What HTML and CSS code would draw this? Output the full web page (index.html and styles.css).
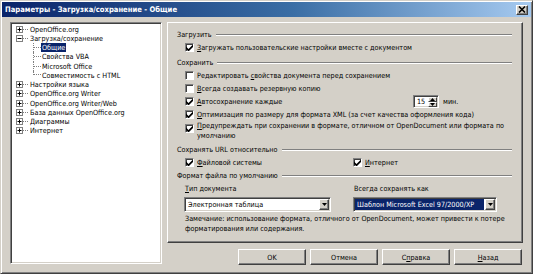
FILE: index.html
```html
<!DOCTYPE html>
<html lang="ru">
<head>
    <meta charset="UTF-8">
    <title>Параметры - Загрузка/сохранение - Общие</title>
    <link rel="stylesheet" href="styles.css">
</head>
<body>
<div class="dialog">
    <div class="titlebar">
        <span class="title">Параметры - Загрузка/сохранение - Общие</span>
        <span class="close-btn">
            <svg width="8" height="7" viewBox="0 0 8 7"><path d="M1 0.5l6 6M7 0.5l-6 6" stroke="#000" stroke-width="1.6"/></svg>
        </span>
    </div>
    <div class="main">
        <div class="tree">
            <div class="node"><svg class="exp" width="7" height="7" viewBox="0 0 7 7"><rect x=".5" y=".5" width="6" height="6" fill="#fff" stroke="#808080"/><path d="M1.5 3.5h4M3.5 1.5v4" stroke="#000"/></svg><span class="dash"></span><span class="label">OpenOffice.org</span></div>
            <div class="node"><svg class="exp" width="7" height="7" viewBox="0 0 7 7"><rect x=".5" y=".5" width="6" height="6" fill="#fff" stroke="#808080"/><path d="M1.5 3.5h4" stroke="#000"/></svg><span class="dash"></span><span class="label">Загрузка/сохранение</span></div>
            <div class="node child"><span class="branch"></span><span class="label selected">Общие</span></div>
            <div class="node child"><span class="branch"></span><span class="label">Свойства VBA</span></div>
            <div class="node child"><span class="branch"></span><span class="label">Microsoft Office</span></div>
            <div class="node child last"><span class="branch"></span><span class="label">Совместимость с HTML</span></div>
            <div class="node"><svg class="exp" width="7" height="7" viewBox="0 0 7 7"><rect x=".5" y=".5" width="6" height="6" fill="#fff" stroke="#808080"/><path d="M1.5 3.5h4M3.5 1.5v4" stroke="#000"/></svg><span class="dash"></span><span class="label">Настройки языка</span></div>
            <div class="node"><svg class="exp" width="7" height="7" viewBox="0 0 7 7"><rect x=".5" y=".5" width="6" height="6" fill="#fff" stroke="#808080"/><path d="M1.5 3.5h4M3.5 1.5v4" stroke="#000"/></svg><span class="dash"></span><span class="label">OpenOffice.org Writer</span></div>
            <div class="node"><svg class="exp" width="7" height="7" viewBox="0 0 7 7"><rect x=".5" y=".5" width="6" height="6" fill="#fff" stroke="#808080"/><path d="M1.5 3.5h4M3.5 1.5v4" stroke="#000"/></svg><span class="dash"></span><span class="label">OpenOffice.org Writer/Web</span></div>
            <div class="node"><svg class="exp" width="7" height="7" viewBox="0 0 7 7"><rect x=".5" y=".5" width="6" height="6" fill="#fff" stroke="#808080"/><path d="M1.5 3.5h4M3.5 1.5v4" stroke="#000"/></svg><span class="dash"></span><span class="label">База данных OpenOffice.org</span></div>
            <div class="node"><svg class="exp" width="7" height="7" viewBox="0 0 7 7"><rect x=".5" y=".5" width="6" height="6" fill="#fff" stroke="#808080"/><path d="M1.5 3.5h4M3.5 1.5v4" stroke="#000"/></svg><span class="dash"></span><span class="label">Диаграммы</span></div>
            <div class="node"><svg class="exp" width="7" height="7" viewBox="0 0 7 7"><rect x=".5" y=".5" width="6" height="6" fill="#fff" stroke="#808080"/><path d="M1.5 3.5h4M3.5 1.5v4" stroke="#000"/></svg><span class="dash"></span><span class="label">Интернет</span></div>
        </div>
        <div class="right">
            <div class="page">
                <div class="group-title">Загрузить</div>
                <div class="row"><span class="cb checked"><svg width="7" height="7" viewBox="0 0 7 7"><path d="M0 2.5l2.5 2.5 4.5-4.5v2.5l-4.5 4.5-2.5-2.5z"/></svg></span><span><u>З</u>агружать пользовательские настройки вместе с документом</span></div>

                <div class="group-title spaced">Сохранить</div>
                <div class="row"><span class="cb"></span><span>Редактировать <u>с</u>войства документа перед сохранением</span></div>
                <div class="row"><span class="cb"></span><span><u>В</u>сегда создавать резервную копию</span></div>
                <div class="row">
                    <span class="cb checked"><svg width="7" height="7" viewBox="0 0 7 7"><path d="M0 2.5l2.5 2.5 4.5-4.5v2.5l-4.5 4.5-2.5-2.5z"/></svg></span>
                    <span class="spin-label"><u>А</u>втосохранение каждые</span>
                    <span class="spin">
                        <span class="spin-val">15</span>
                        <span class="spin-btns">
                            <span class="spin-btn"><svg width="5" height="3" viewBox="0 0 5 3"><path d="M2.5 0L5 3H0z"/></svg></span>
                            <span class="spin-btn"><svg width="5" height="3" viewBox="0 0 5 3"><path d="M0 0h5L2.5 3z"/></svg></span>
                        </span>
                    </span>
                    <span class="unit">мин.</span>
                </div>
                <div class="row"><span class="cb checked"><svg width="7" height="7" viewBox="0 0 7 7"><path d="M0 2.5l2.5 2.5 4.5-4.5v2.5l-4.5 4.5-2.5-2.5z"/></svg></span><span><u>О</u>птимизация по размеру для формата XML (за счет качества оформления кода)</span></div>
                <div class="row tall"><span class="cb checked"><svg width="7" height="7" viewBox="0 0 7 7"><path d="M0 2.5l2.5 2.5 4.5-4.5v2.5l-4.5 4.5-2.5-2.5z"/></svg></span><span><u>П</u>редупреждать при сохранении в формате, отличном от OpenDocument или формата по<br>умолчанию</span></div>

                <div class="group-title spaced">Сохранять URL относительно</div>
                <div class="row pair">
                    <span class="pair-item"><span class="cb checked"><svg width="7" height="7" viewBox="0 0 7 7"><path d="M0 2.5l2.5 2.5 4.5-4.5v2.5l-4.5 4.5-2.5-2.5z"/></svg></span><span><u>Ф</u>айловой системы</span></span>
                    <span class="pair-item"><span class="cb checked"><svg width="7" height="7" viewBox="0 0 7 7"><path d="M0 2.5l2.5 2.5 4.5-4.5v2.5l-4.5 4.5-2.5-2.5z"/></svg></span><span><u>И</u>нтернет</span></span>
                </div>

                <div class="group-title">Формат файла по умолчанию</div>
                <div class="formats">
                    <span class="field-label"><u>Т</u>ип документа</span>
                    <span class="field-label">Всегда сохранять как</span>
                    <div class="combo wide">
                        <span class="combo-text">Электронная таблица</span>
                        <span class="combo-btn"><svg width="5" height="3" viewBox="0 0 5 3"><path d="M0 0h5L2.5 3z"/></svg></span>
                    </div>
                    <div class="combo">
                        <span class="combo-text selected">Шаблон Microsoft Excel 97/2000/XP</span>
                        <span class="combo-btn"><svg width="5" height="3" viewBox="0 0 5 3"><path d="M0 0h5L2.5 3z"/></svg></span>
                    </div>
                </div>
                <div class="note">Замечание: использование формата, отличного от OpenDocument, может привести к потере<br>форматирования или содержания.</div>
            </div>
            <div class="buttons">
                <span class="btn">OK</span>
                <span class="btn">Отмена</span>
                <span class="btn">С<u>п</u>равка</span>
                <span class="btn"><u>Н</u>азад</span>
            </div>
        </div>
    </div>
</div>
</body>
</html>
```

FILE: styles.css
```css
* {
    box-sizing: border-box;
}
body {
    margin: 0;
    background: #d4d0c8;
    font-family: "DejaVu Sans Condensed", "DejaVu Sans", sans-serif;
    font-stretch: condensed;
    font-size: 7.2px;
    color: #000;
}
u {
    text-decoration-thickness: 1px;
}

/* window frame */
.dialog {
    width: 533px;
    height: 274px;
    background: #d4d0c8;
    border: 1px solid;
    border-color: #d4d0c8 #404040 #404040 #d4d0c8;
    box-shadow: inset 1px 1px #fff, inset -1px -1px #808080;
    padding: 1px;
    display: flex;
    flex-direction: column;
}
.titlebar {
    height: 15px;
    display: flex;
    align-items: center;
    justify-content: space-between;
    padding: 0 3px 0 3px;
    background: linear-gradient(to right, #0a246a 0%, #3a6ea5 55%, #a6caf0 100%);
    color: #fff;
    font-weight: bold;
    font-size: 7.6px;
    white-space: nowrap;
}
.close-btn {
    width: 12px;
    height: 10px;
    background: #d4d0c8;
    border: 1px solid;
    border-color: #fff #404040 #404040 #fff;
    box-shadow: inset -1px -1px #808080;
    display: flex;
    align-items: center;
    justify-content: center;
}
.main {
    display: flex;
    gap: 5px;
    margin-top: 5px;
    padding-left: 8px;
}

/* left tree */
.tree {
    width: 152px;
    height: 242px;
    background: #fff;
    border: 1px solid;
    border-color: #808080 #fff #fff #808080;
    box-shadow: inset 1px 1px #404040, inset -1px -1px #d4d0c8;
    padding: 1.5px 0 0 5px;
    overflow: hidden;
}
.node {
    display: flex;
    align-items: center;
    height: 9.25px;
    white-space: nowrap;
}
.node .exp {
    flex: none;
}
.dash {
    width: 5px;
    border-top: 1px dotted #808080;
    margin-right: 1px;
}
.child {
    padding-left: 17px;
}
.branch {
    width: 8px;
    align-self: stretch;
    border-left: 1px dotted #808080;
    display: flex;
    align-items: center;
}
.branch::after {
    content: '';
    width: 7px;
    border-top: 1px dotted #808080;
}
.child.last .branch {
    align-self: flex-start;
    height: 50%;
    align-items: flex-end;
}
.label {
    padding: 0 1px;
    line-height: 9px;
}
.label.selected {
    background: #0a246a;
    color: #fff;
}

/* right side */
.right {
    width: 356px;
    display: flex;
    flex-direction: column;
    gap: 6px;
}
.page {
    height: 221px;
    border: 1px solid;
    border-color: #fff #404040 #404040 #fff;
    box-shadow: inset -1px -1px #808080;
    padding: 5px 10px 0 9px;
}
.group-title {
    display: flex;
    align-items: center;
    height: 13px;
    gap: 4px;
    white-space: nowrap;
}
.group-title::after {
    content: '';
    flex: 1;
    border-top: 1px solid #808080;
    border-bottom: 1px solid #fff;
}
.group-title.spaced {
    margin-top: 2px;
}
.row {
    display: flex;
    align-items: center;
    height: 13px;
    padding-left: 8px;
    white-space: nowrap;
}
.row.tall {
    height: 20px;
    align-items: flex-start;
    line-height: 10px;
}
.row.tall .cb {
    margin-top: 3px;
}
.cb {
    flex: none;
    width: 9px;
    height: 9px;
    margin-right: 3px;
    background: #fff;
    border: 1px solid;
    border-color: #808080 #fff #fff #808080;
    box-shadow: inset 1px 1px #404040;
    display: flex;
    align-items: center;
    justify-content: center;
}
.spin-label {
    width: 216px;
}
.spin {
    width: 26px;
    height: 13px;
    display: flex;
    background: #fff;
    border: 1px solid;
    border-color: #808080 #fff #fff #808080;
    box-shadow: inset 1px 1px #404040, inset -1px -1px #d4d0c8;
    padding: 1px;
}
.spin-val {
    flex: 1;
    padding-left: 2px;
    line-height: 9px;
}
.spin-btns {
    width: 9px;
    display: flex;
    flex-direction: column;
}
.spin-btn {
    flex: 1;
    background: #d4d0c8;
    border: 1px solid;
    border-color: #fff #404040 #404040 #fff;
    display: flex;
    align-items: center;
    justify-content: center;
}
.unit {
    margin-left: 4px;
}
.pair {
    display: grid;
    grid-template-columns: 168px auto;
}
.pair-item {
    display: flex;
    align-items: center;
}
.formats {
    display: grid;
    grid-template-columns: 169px 144px;
    grid-template-rows: 13px 15px;
    row-gap: 2px;
    padding-left: 7px;
    align-items: center;
}
.field-label {
    padding-left: 1px;
}
.combo {
    width: 144px;
    height: 15px;
    display: flex;
    background: #fff;
    border: 1px solid;
    border-color: #808080 #fff #fff #808080;
    box-shadow: inset 1px 1px #404040, inset -1px -1px #d4d0c8;
    padding: 1px;
}
.combo.wide {
    width: 147px;
}
.combo-text {
    flex: 1;
    padding-left: 2px;
    margin-right: 1px;
    line-height: 11px;
    white-space: nowrap;
    overflow: hidden;
}
.combo-text.selected {
    background: #0a246a;
    color: #fff;
}
.combo-btn {
    width: 10px;
    background: #d4d0c8;
    border: 1px solid;
    border-color: #fff #404040 #404040 #fff;
    box-shadow: inset -1px -1px #808080;
    display: flex;
    align-items: center;
    justify-content: center;
}
.note {
    margin-top: 2px;
    padding-left: 8px;
    line-height: 10px;
    white-space: nowrap;
}
.buttons {
    display: flex;
    justify-content: flex-end;
    gap: 4px;
    padding-right: 1px;
}
.btn {
    width: 68px;
    height: 16px;
    border: 1px solid;
    border-color: #fff #404040 #404040 #fff;
    box-shadow: inset -1px -1px #808080;
    display: flex;
    align-items: center;
    justify-content: center;
}
```
